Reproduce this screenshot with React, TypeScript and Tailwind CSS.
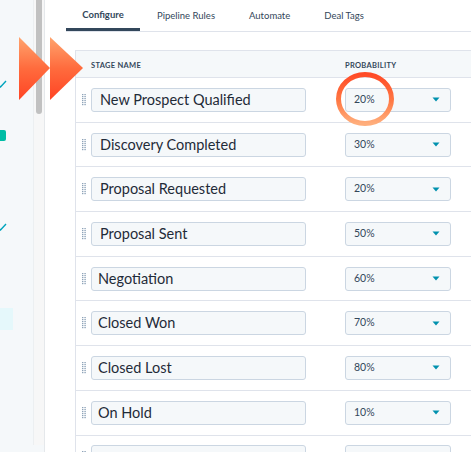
import React from "react";

const stages = [
  { name: "New Prospect Qualified", prob: "20%" },
  { name: "Discovery Completed", prob: "30%" },
  { name: "Proposal Requested", prob: "20%" },
  { name: "Proposal Sent", prob: "50%" },
  { name: "Negotiation", prob: "60%" },
  { name: "Closed Won", prob: "70%" },
  { name: "Closed Lost", prob: "80%" },
  { name: "On Hold", prob: "10%" },
  { name: "", prob: "" },
];

const tabs = ["Configure", "Pipeline Rules", "Automate", "Deal Tags"];

function DragHandle() {
  return (
    <svg width="4" height="12" viewBox="0 0 4 12">
      {Array.from({ length: 6 }).map((_, r) => (
        <g key={r}>
          <rect x="0" y={r * 2} width="1.4" height="1.2" fill="#8ea3b8" />
          <rect x="2.4" y={r * 2} width="1.4" height="1.2" fill="#8ea3b8" />
        </g>
      ))}
    </svg>
  );
}

function Arrows() {
  return (
    <svg className="absolute left-[19px] top-[37px]" width="66" height="64" viewBox="0 0 66 64">
      <defs>
        <linearGradient id="ag" x1="0" y1="0" x2="0" y2="1">
          <stop offset="0" stopColor="#ffa46e" />
          <stop offset="0.5" stopColor="#ff6b3d" />
          <stop offset="1" stopColor="#ff4424" />
        </linearGradient>
      </defs>
      <polygon points="0,0 31,31 0,63" fill="url(#ag)" />
      <polygon points="31,0 64,31 31,63" fill="url(#ag)" />
    </svg>
  );
}

function Ring() {
  return (
    <svg className="absolute left-[335px] top-[71px]" width="60" height="56" viewBox="0 0 60 56">
      <defs>
        <linearGradient id="rg" x1="0" y1="0" x2="0" y2="1">
          <stop offset="0" stopColor="#ff4a26" />
          <stop offset="0.55" stopColor="#ff7a45" />
          <stop offset="1" stopColor="#ffae7c" />
        </linearGradient>
      </defs>
      <ellipse cx="30" cy="28" rx="26.5" ry="24.5" fill="none" stroke="url(#rg)" strokeWidth="5" />
    </svg>
  );
}

export default function App() {
  return (
    <div className="relative h-[473px] w-[471px] overflow-hidden bg-white" style={{ fontFamily: "Lato, 'Noto Sans', sans-serif" }}>
      <div className="flex h-[452px]">
        {/* sidebar */}
        <div className="relative w-[33px] shrink-0 bg-[#f5f8fa]">
          <svg className="absolute left-[-3px] top-[80px]" width="10" height="8" viewBox="0 0 10 8">
            <path d="M1 4.5 L3.5 7 L9 1" fill="none" stroke="#00a4bd" strokeWidth="1.4" />
          </svg>
          <div className="absolute left-0 top-[130px] h-[11px] w-[6px] rounded-r-[2px] bg-[#00bda5]" />
          <svg className="absolute left-[-3px] top-[223px]" width="10" height="8" viewBox="0 0 10 8">
            <path d="M1 4.5 L3.5 7 L9 1" fill="none" stroke="#00a4bd" strokeWidth="1.4" />
          </svg>
          <div className="absolute left-0 top-[308px] h-[22px] w-[13px] bg-[#e5f8fb]" />
        </div>
        <div className="flex w-[12px] shrink-0 flex-col border-r border-[#e5e8eb] bg-[#f5f8fa]">
          <div className="flex h-[445px] w-[11px] justify-center border-l border-[#eceff1] bg-[#f7f7f7]">
            <div className="h-[114px] w-[6px] rounded-b-[3px] bg-[#c1c1c1]" />
          </div>
        </div>

        {/* main */}
        <div className="flex-1 overflow-hidden bg-white pl-[21px]">
          <div className="flex h-[32px] items-end border-b border-[#dfe3eb] text-[9.5px] text-[#33475b]">
            {tabs.map((t, i) => (
              <div
                key={t}
                className={
                  i === 0
                    ? "flex h-[32px] w-[74px] items-center justify-center border-b-[3px] border-[#33475b] pt-[3px] font-bold"
                    : "flex h-[32px] items-center px-[17px] pt-[3px]"
                }
              >
                {t}
              </div>
            ))}
          </div>

          <div className="ml-[9px] mt-[18px] border-l border-t border-[#dfe3eb]">
            <div className="flex h-[27px] items-center border-b border-[#dfe3eb] bg-[#f5f8fa] pt-[3px] text-[7.5px] font-bold tracking-[0.3px] text-[#33475b]">
              <div className="w-[269px] pl-[15px]">STAGE NAME</div>
              <div>PROBABILITY</div>
            </div>
            {stages.map((s, i) => (
              <div key={i} className="flex h-[44.7px] items-center border-b border-[#dfe3eb]">
                <div className="flex w-[15px] justify-center pl-[1px]">
                  <DragHandle />
                </div>
                <div
                  className={
                    "flex h-[24px] w-[215px] items-center rounded-[3px] border border-[#cbd6e2] bg-[#f5f8fa] text-[14.5px] text-[#1f2b38] " +
                    (i < 4 ? "pl-[8px]" : "pl-[6px]")
                  }
                >
                  {s.name}
                </div>
                <div className="ml-[39px] flex h-[24px] w-[106px] items-center justify-between rounded-[3px] border border-[#cbd6e2] bg-[#f5f8fa] pl-[8px] pr-[10px] text-[10.5px] text-[#33475b]">
                  <span>{s.prob}</span>
                  {s.prob && (
                    <svg width="8" height="5" viewBox="0 0 8 5">
                      <path d="M0.5 0.5 L7.5 0.5 L4 4.5 Z" fill="#0091ae" />
                    </svg>
                  )}
                </div>
              </div>
            ))}
          </div>
        </div>
      </div>
      <Arrows />
      <Ring />
    </div>
  );
}
